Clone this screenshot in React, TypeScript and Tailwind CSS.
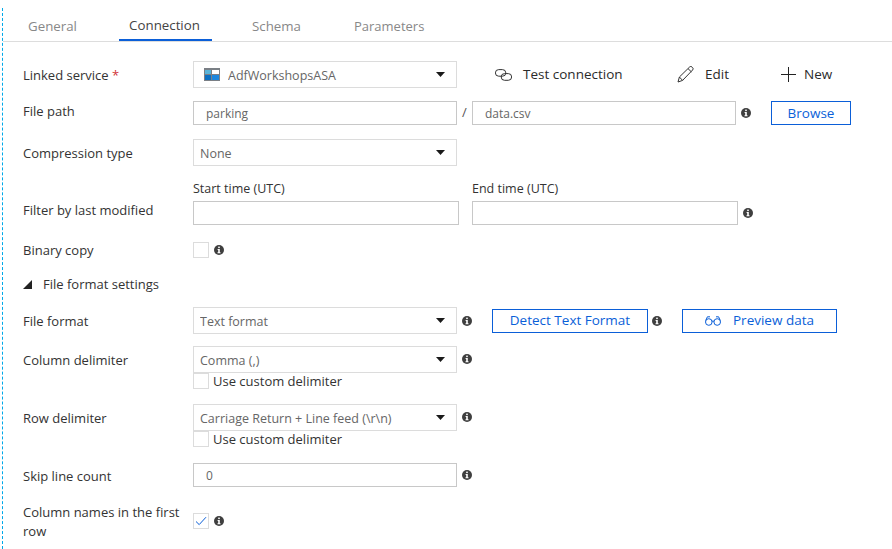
import React from 'react';

const FONT = "font-['Open_Sans','Noto_Sans',sans-serif]";

const InfoIcon = ({ className = '' }: { className?: string }) => (
	<svg width="10" height="10" viewBox="0 0 10 10" className={`shrink-0 ${className}`}>
		<circle cx="5" cy="5" r="5" fill="#3f3f3f" />
		<rect x="4.2" y="1.6" width="1.6" height="1.5" fill="#fff" />
		<path d="M3.6 4h2.2v3.2h.7v1H3.5v-1h.7V5h-.6z" fill="#fff" />
	</svg>
);

const Caret = () => (
	<svg width="9" height="5" viewBox="0 0 9 5" className="shrink-0">
		<path d="M0 0h9L4.5 5z" fill="#1a1a1a" />
	</svg>
);

const LinkedServiceIcon = () => (
	<svg width="16" height="13" viewBox="0 0 16 13" className="shrink-0">
		<rect width="16" height="13" fill="#7a7f85" />
		<rect x="1" y="2" width="6" height="4" fill="#59b4d9" />
		<rect x="8" y="2" width="7" height="4" fill="#fff" />
		<rect x="1" y="7" width="6" height="5" fill="#0a6fc2" />
		<rect x="8" y="7" width="7" height="5" fill="#1c86dd" />
	</svg>
);

const LinkIcon = () => (
	<svg width="17" height="12" viewBox="0 0 17 12" fill="none" stroke="#333" strokeWidth="1" className="shrink-0">
		<path d="M6 7.2H3.7a3.3 3.3 0 0 1 0-6.6h3.8a3.3 3.3 0 0 1 3.3 3.3" />
		<path d="M11 4.6h2.3a3.3 3.3 0 0 1 0 6.7H9.5a3.3 3.3 0 0 1-3.3-3.4" />
		<path d="M6.2 7.9a3.3 3.3 0 0 1 3.3-3.3h1.5M10.8 3.9a3.3 3.3 0 0 1-3.3 3.3H6" />
	</svg>
);

const PencilIcon = () => (
	<svg width="17" height="17" viewBox="0 0 17 17" fill="none" stroke="#333" strokeWidth="1" className="shrink-0">
		<path d="M1 16l1.4-5L12.6 1a1.7 1.7 0 0 1 2.4 0l.6.6a1.7 1.7 0 0 1 0 2.4L5.6 14.4z" />
		<path d="M2.4 11l3.2 3.4M11 2.6l3.4 3.3" />
	</svg>
);

const PlusIcon = () => (
	<svg width="15" height="15" viewBox="0 0 15 15" stroke="#222" strokeWidth="1" className="shrink-0">
		<path d="M7.5 0v15M0 7.5h15" />
	</svg>
);

const GlassesIcon = () => (
	<svg width="16" height="10" viewBox="0 0 16 10" fill="none" stroke="#0b5fd8" strokeWidth="1" className="shrink-0">
		<circle cx="3.8" cy="6" r="3.3" />
		<circle cx="12.2" cy="6" r="3.3" />
		<path d="M7 5.4a1.4 1.4 0 0 1 2 0M.7 4.6L2.4.8H5M15.3 4.6L13.6.8H11" />
	</svg>
);

const Select = ({ value, icon }: { value: string; icon?: React.ReactNode }) => (
	<div className="flex h-[27px] w-[264px] shrink-0 items-center border border-[#dcdcdc] bg-white pr-[11px] pl-[6px] text-[12.5px] text-[#666]">
		{icon}
		<span className="flex-1 truncate pt-[3px]">{value}</span>
		<Caret />
	</div>
);

const TextBox = ({ value, width = 'w-[264px]' }: { value?: string; width?: string }) => (
	<div className={`flex h-6 ${width} shrink-0 items-center border border-[#c8c8c8] bg-white pt-[2px] pl-3 text-xs text-[#666]`}>{value}</div>
);

const OutlineButton = ({ children, width }: { children: React.ReactNode; width: string }) => (
	<button className={`flex h-6 ${width} shrink-0 items-center justify-center border border-[#0b5fd8] bg-white text-[13.5px] font-medium text-[#0b5fd8]`}>
		{children}
	</button>
);

const CheckBox = ({ checked }: { checked?: boolean }) => (
	<div className="flex h-4 w-4 shrink-0 items-center justify-center border border-[#dcdcdc] bg-white">
		{checked && (
			<svg width="12" height="10" viewBox="0 0 12 10" fill="none" stroke="#0b5fd8" strokeWidth="1">
				<path d="M1 5.5L4.2 8.6 11 1.2" />
			</svg>
		)}
	</div>
);

const Row = ({ label, className = '', labelClass = 'pt-px leading-[15px]', children }: { label: React.ReactNode; className?: string; labelClass?: string; children: React.ReactNode }) => (
	<div className={`flex items-center ${className}`}>
		<div className={`w-[170px] shrink-0 text-[13px] text-[#333] ${labelClass}`}>{label}</div>
		{children}
	</div>
);

const Action = ({ icon, label, className }: { icon: React.ReactNode; label: string; className: string }) => (
	<div className={`flex items-center text-[13.5px] font-medium text-[#2b2b2b] ${className}`}>
		{icon}
		<span>{label}</span>
	</div>
);

const UseCustomDelimiter = () => (
	<div className="flex h-4 items-center pl-[170px] text-[13px] text-[#333]">
		<CheckBox />
		<span className="ml-1 leading-4">Use custom delimiter</span>
	</div>
);

const tabs = [
	{ label: 'General', className: 'w-[91px] text-[#888]' },
	{ label: 'Connection', className: 'w-[93px] justify-center border-b-2 border-[#0b5fd8] pr-[2px] text-[#444]' },
	{ label: 'Schema', className: 'w-[102px] pl-[40px] text-[#888]' },
	{ label: 'Parameters', className: 'pl-[40px] text-[13px] text-[#888]' },
];

const App = () => {
	return (
		<div className={`h-[549px] w-[892px] overflow-hidden bg-white pt-2 pl-[2px] ${FONT}`}>
			<div className="h-[541px] border-l border-dashed border-[#00a8e8]">
				{/* Tabs */}
				<div className="flex h-[34px] border-b border-[#dddddd] pl-[25px] text-[13.3px]">
					{tabs.map((tab) => (
						<div key={tab.label} className={`flex h-[33px] items-center pt-1 ${tab.className}`}>
							{tab.label}
						</div>
					))}
				</div>

				<div className="pl-5">
					<Row
						label={
							<>
								Linked service <span className="text-[#d13438]">*</span>
							</>
						}
						className="mt-[19px]"
					>
						<Select
							value="AdfWorkshopsASA"
							icon={
								<span className="mr-[8px] ml-[4px]">
									<LinkedServiceIcon />
								</span>
							}
						/>
						<Action icon={<LinkIcon />} label="Test connection" className="ml-[38px] w-[182px] gap-[11px]" />
						<Action icon={<PencilIcon />} label="Edit" className="w-[104px] gap-[11px]" />
						<Action icon={<PlusIcon />} label="New" className="gap-2" />
					</Row>

					<Row label="File path" className="mt-[13px]" labelClass="-mt-[4px] pt-px leading-[15px]">
						<TextBox value="parking" />
						<span className="w-[15px] text-center text-[13px] text-[#555]">/</span>
						<TextBox value="data.csv" />
						<InfoIcon className="ml-[5px]" />
						<div className="ml-[20px]">
							<OutlineButton width="w-[80px]">Browse</OutlineButton>
						</div>
					</Row>

					<Row label="Compression type" className="mt-[14px]">
						<Select value="None" />
					</Row>

					<div className="mt-[14px] flex">
						<div className="flex w-[170px] shrink-0 items-end pb-[5px] text-[13px] text-[#333]">Filter by last modified</div>
						<div className="w-[279px]">
							<div className="h-[21px] text-[12.5px] leading-[18px] text-[#333]">Start time (UTC)</div>
							<TextBox width="w-[266px]" />
						</div>
						<div>
							<div className="h-[21px] text-[12.5px] leading-[18px] text-[#333]">End time (UTC)</div>
							<div className="flex items-center">
								<TextBox width="w-[266px]" />
								<InfoIcon className="ml-[5px]" />
							</div>
						</div>
					</div>

					<Row label="Binary copy" className="mt-[17px]">
						<CheckBox />
						<InfoIcon className="ml-[5px]" />
					</Row>

					<div className="mt-[18px] flex h-4 items-center text-[13px] text-[#333]">
						<svg width="9" height="9" viewBox="0 0 9 9" className="mr-[11px] shrink-0">
							<path d="M9 0v9H0z" fill="#222" />
						</svg>
						<span className="pt-[2px]">File format settings</span>
					</div>

					<Row label="File format" className="mt-[15px]">
						<Select value="Text format" />
						<InfoIcon className="ml-[5px]" />
						<div className="ml-5">
							<OutlineButton width="w-[156px]">Detect Text Format</OutlineButton>
						</div>
						<InfoIcon className="ml-[4px]" />
						<div className="ml-5">
							<OutlineButton width="w-[155px] gap-[12px]">
								<GlassesIcon />
								Preview data
							</OutlineButton>
						</div>
					</Row>

					<Row label="Column delimiter" className="mt-3">
						<Select value="Comma (,)" />
						<InfoIcon className="ml-[5px] -mt-[2px]" />
					</Row>
					<UseCustomDelimiter />

					<Row label="Row delimiter" className="mt-[15px]">
						<Select value="Carriage Return + Line feed (\r\n)" />
						<InfoIcon className="ml-[5px] -mt-[2px]" />
					</Row>
					<UseCustomDelimiter />

					<Row label="Skip line count" className="mt-4" labelClass="pt-[3px] leading-[15px]">
						<TextBox value="0" />
						<InfoIcon className="ml-[5px]" />
					</Row>

					<Row label="Column names in the first row" className="mt-[14px]" labelClass="pt-[2px] pr-1 leading-[19px]">
						<CheckBox checked />
						<InfoIcon className="ml-[5px]" />
					</Row>
				</div>
			</div>
		</div>
	);
};

export default App;
